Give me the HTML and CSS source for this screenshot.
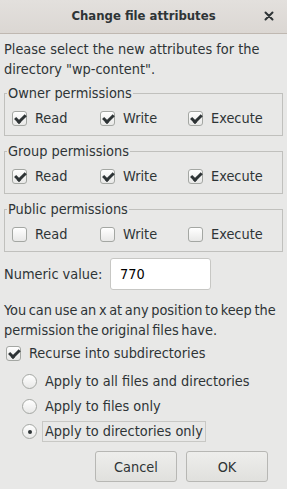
FILE: index.html
```html
<!DOCTYPE html>
<html>
<head>
<meta charset="utf-8">
<link rel="stylesheet" href="styles.css">
</head>
<body>
<div class="dialog">
  <div class="titlebar">
    <span class="title">Change file attributes</span>
    <svg class="close" width="10" height="10" viewBox="0 0 10 10"><path d="M1.5 1.5 L8.5 8.5 M8.5 1.5 L1.5 8.5" stroke="#2e3436" stroke-width="2" stroke-linecap="round"/></svg>
  </div>
  <div class="content">
    <p class="intro">Please select the new attributes for the directory "wp-content".</p>

    <fieldset class="group">
      <legend>Owner permissions</legend>
      <div class="row">
        <label class="opt"><span class="cb on"></span>Read</label>
        <label class="opt"><span class="cb on"></span>Write</label>
        <label class="opt"><span class="cb on"></span>Execute</label>
      </div>
    </fieldset>

    <fieldset class="group">
      <legend>Group permissions</legend>
      <div class="row">
        <label class="opt"><span class="cb on"></span>Read</label>
        <label class="opt"><span class="cb on"></span>Write</label>
        <label class="opt"><span class="cb on"></span>Execute</label>
      </div>
    </fieldset>

    <fieldset class="group">
      <legend>Public permissions</legend>
      <div class="row">
        <label class="opt"><span class="cb"></span>Read</label>
        <label class="opt"><span class="cb"></span>Write</label>
        <label class="opt"><span class="cb"></span>Execute</label>
      </div>
    </fieldset>

    <div class="numeric">
      <span class="nlabel">Numeric value:</span>
      <span class="entry">770</span>
    </div>

    <p class="hint">You can use an x at any position to keep the<br>permission the original files have.</p>

    <label class="opt recurse"><span class="cb on"></span>Recurse into subdirectories</label>

    <div class="radios">
      <label class="ropt"><span class="rb"></span><span class="rl">Apply to all files and directories</span></label>
      <label class="ropt"><span class="rb"></span><span class="rl">Apply to files only</span></label>
      <label class="ropt"><span class="rb on"></span><span class="rl focus">Apply to directories only</span></label>
    </div>

    <div class="buttons">
      <span class="btn">Cancel</span>
      <span class="btn">OK</span>
    </div>
  </div>
</div>
</body>
</html>
```

FILE: styles.css
```css
html, body {
  margin: 0;
  padding: 0;
}
body {
  width: 287px;
  height: 489px;
  background: #e8e8e7;
  font-family: "DejaVu Sans Condensed", "DejaVu Sans", sans-serif;
  font-size: 14.4px;
  line-height: 20px;
  color: #2e3436;
  overflow: hidden;
}
.dialog {
  display: flex;
  flex-direction: column;
}
.titlebar {
  height: 34px;
  box-sizing: border-box;
  border-bottom: 1px solid #bfb8b1;
  background: linear-gradient(#e3e0dd, #dbd7d3);
  display: flex;
  align-items: center;
  justify-content: center;
  position: relative;
}
.title {
  font-weight: bold;
  font-size: 13px;
  color: #2e3436;
  margin-top: -1px;
}
.close {
  position: absolute;
  left: 264px;
  top: 11px;
}
.content {
  padding: 5px 4px 0 4px;
  display: flex;
  flex-direction: column;
}
p {
  margin: 0;
}
.group {
  margin: 5px 0 0 0;
  padding: 4px 0 5px 7px;
  border: 1px solid #c0c0bd;
  border-radius: 0;
}
.group + .group {
  margin-top: 6px;
}
.group legend {
  padding: 0 1px;
  margin-left: -5px;
  line-height: 18px;
}
.row {
  display: flex;
  height: 24px;
  align-items: center;
}
.opt {
  display: flex;
  align-items: center;
  width: 88px;
}
.cb {
  flex: none;
  width: 15px;
  height: 15px;
  box-sizing: border-box;
  border: 1px solid #a4a7a3;
  border-radius: 3px;
  background: linear-gradient(#ffffff, #e8e8e7);
  margin-right: 8px;
  position: relative;
}
.cb.on::after {
  content: "";
  position: absolute;
  left: 4px;
  top: 0.5px;
  width: 3.5px;
  height: 8px;
  border: solid #2e3436;
  border-width: 0 3px 3px 0;
  transform: rotate(45deg);
}
.numeric {
  display: flex;
  align-items: center;
  margin-top: 6px;
  height: 32px;
}
.nlabel {
  width: 106px;
}
.entry {
  width: 101px;
  height: 32px;
  box-sizing: border-box;
  border: 1px solid #c7c7c4;
  border-radius: 3px;
  background: #fff;
  padding-left: 9px;
  line-height: 30px;
  color: #000;
}
.hint {
  margin-top: 10px;
  white-space: nowrap;
  word-spacing: -1.5px;
}
.recurse {
  width: auto;
  margin-top: 3px;
  margin-left: 2px;
  height: 20px;
}
.radios {
  display: flex;
  flex-direction: column;
  margin-left: 18px;
  margin-top: 6px;
}
.ropt {
  display: flex;
  align-items: center;
  height: 25px;
}
.rb {
  flex: none;
  width: 15px;
  height: 15px;
  box-sizing: border-box;
  border: 1px solid #a4a7a3;
  border-radius: 50%;
  background: linear-gradient(#ffffff, #e8e8e7);
  margin-right: 5px;
  position: relative;
}
.rb.on::after {
  content: "";
  position: absolute;
  left: 4.5px;
  top: 4.5px;
  width: 4px;
  height: 4px;
  border-radius: 50%;
  background: #2e3436;
}
.rl {
  padding: 0 2px;
  line-height: 19px;
  border: 1px solid transparent;
}
.rl.focus {
  border-color: #c8c8c5;
}
.buttons {
  display: flex;
  justify-content: flex-end;
  gap: 9px;
  margin-top: 7px;
  margin-right: 15px;
}
.btn {
  width: 82px;
  height: 31px;
  box-sizing: border-box;
  border: 1px solid #b7b7b4;
  border-radius: 3px;
  background: linear-gradient(#eeeeec, #e0e0dd);
  display: flex;
  align-items: center;
  justify-content: center;
}
```
